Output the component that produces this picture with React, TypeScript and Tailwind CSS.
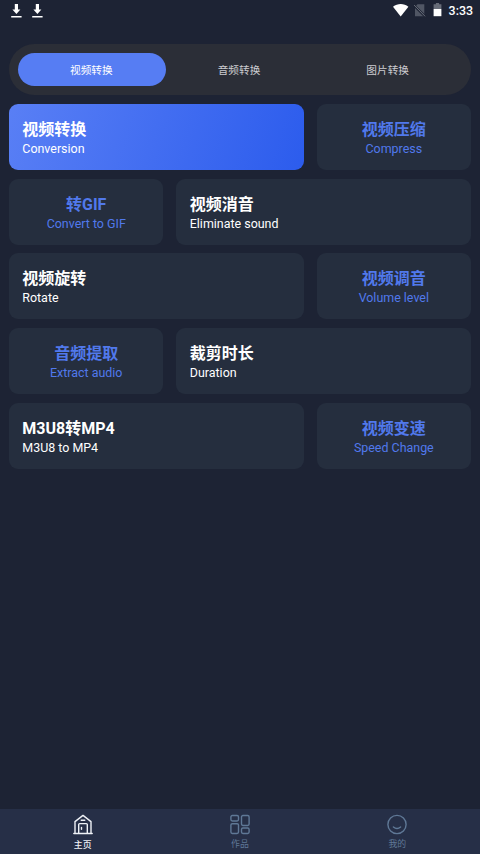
type Card = { title: string; sub: string; tone: "primary" | "plain" | "accent" };

const rows: Card[][] = [
  [
    { title: "视频转换", sub: "Conversion", tone: "primary" },
    { title: "视频压缩", sub: "Compress", tone: "accent" },
  ],
  [
    { title: "转GIF", sub: "Convert to GIF", tone: "accent" },
    { title: "视频消音", sub: "Eliminate sound", tone: "plain" },
  ],
  [
    { title: "视频旋转", sub: "Rotate", tone: "plain" },
    { title: "视频调音", sub: "Volume level", tone: "accent" },
  ],
  [
    { title: "音频提取", sub: "Extract audio", tone: "accent" },
    { title: "裁剪时长", sub: "Duration", tone: "plain" },
  ],
  [
    { title: "M3U8转MP4", sub: "M3U8 to MP4", tone: "plain" },
    { title: "视频变速", sub: "Speed Change", tone: "accent" },
  ],
];

const tones = {
  primary: "flex-1 items-start pl-[13.3px] text-white bg-[linear-gradient(107deg,#597ff5,#2c5ced)]",
  plain: "flex-1 items-start pl-[13.3px] text-white bg-[#252e3e]",
  accent: "w-[154.4px] items-center text-[#5179ec] bg-[#252e3e]",
};

function DownloadIcon() {
  return (
    <svg width="11" height="14" viewBox="0 0 11 14" fill="#fff">
      <path d="M3.8 0h3.2v5.6h2.4L5.4 10 1.4 5.6h2.4zM.2 11.9h10.4v1.6H.2z" />
    </svg>
  );
}

function StatusBar() {
  return (
    <header className="flex h-[21px] items-start justify-between pl-[11px] pr-[7px]">
      <div className="flex gap-[10px] pt-1">
        <DownloadIcon />
        <DownloadIcon />
      </div>
      <div className="flex items-start">
        <svg width="52" height="21" viewBox="0 0 52 21">
          <path d="M0 6.7C4.5 3.2 10.9 3.2 15.4 6.7L7.7 16.5z" fill="#fff" />
          <path d="M24.5 4.3h6.8v11.9H22V7z" fill="#505664" />
          <path d="M20.8 5.2l11 11" stroke="#1d2334" strokeWidth="2.4" />
          <path d="M21.1 5l11 11.3" stroke="#676c78" strokeWidth="1" />
          <path d="M42.9 3h3.2v1.2h2.3v4.9h-7.8V4.2h2.3z" fill="#686d79" />
          <path d="M40.6 9h7.8v7.2h-7.8z" fill="#fff" />
        </svg>
        <span className="ml-1 mt-1 text-[12.4px] leading-[14px] font-medium text-white">3:33</span>
      </div>
    </header>
  );
}

function HomeIcon() {
  return (
    <svg width="20" height="21" viewBox="0 0 20 21" fill="none" stroke="#eef1f6" strokeWidth="1.4" strokeLinejoin="round" strokeLinecap="round">
      <path d="M.8 19.5h18.4M2 19.4V7.6L10 1.4l8 6.2v11.8M5.7 19.2v-8.6q0-1 1-1h6.6q1 0 1 1v8.6M8.2 6.3h3.6M8.5 13.5v1.8" />
    </svg>
  );
}

function WorksIcon() {
  return (
    <svg width="20" height="21" viewBox="0 0 20 21" fill="none" stroke="#5f7896" strokeWidth="1.4">
      <rect x=".9" y="1.5" width="7.6" height="5.5" rx="1.4" />
      <rect x="11.5" y="1.5" width="7.6" height="10" rx="1.4" />
      <rect x=".9" y="9.7" width="7.6" height="9.8" rx="1.4" />
      <rect x="11.5" y="14" width="7.6" height="5.5" rx="1.4" />
    </svg>
  );
}

function ProfileIcon() {
  return (
    <svg width="20" height="21" viewBox="0 0 20 21" fill="none" stroke="#5f7896" strokeWidth="1.4" strokeLinecap="round">
      <circle cx="10" cy="10.5" r="9.1" />
      <path d="M6.4 13q3.6 3 7.2 0" />
    </svg>
  );
}

export default function App() {
  return (
    <div className="flex h-[854px] w-[480px] flex-col bg-[#1d2334] font-['Roboto','Noto_Sans_CJK_SC',sans-serif]">
      <StatusBar />
      <nav className="mx-[9px] mt-[23px] flex h-[51px] items-center rounded-[26px] bg-[#2b2e37] pl-[9px] pr-[10px] text-[10.67px] text-[#cbccd0]">
        <span className="flex h-[33px] flex-1 items-center justify-center rounded-full bg-[#567df3] pr-px pt-[2px] text-white">视频转换</span>
        <span className="flex h-[33px] flex-1 items-center justify-center pr-[2px] pt-[2px]">音频转换</span>
        <span className="flex h-[33px] flex-1 items-center justify-center pt-[2px]">图片转换</span>
      </nav>
      <main className="mx-[9px] mt-[9px] flex flex-1 flex-col gap-[8.95px]">
        {rows.map((row) => (
          <section key={row[0].title} className="flex h-[65.8px] gap-[13.1px]">
            {row.map((c) => (
              <div key={c.title} className={`flex flex-col justify-center rounded-[9px] pt-[4.6px] ${tones[c.tone]}`}>
                <span className="text-[16px] leading-[19px] font-bold">{c.title}</span>
                <span className="text-[12.44px] leading-[19.4px]">{c.sub}</span>
              </div>
            ))}
          </section>
        ))}
      </main>
      <footer className="flex h-[45px] bg-[#262f47] px-[4px] text-[8.9px] leading-[13px] text-[#5f7896]">
        <div className="flex flex-1 flex-col items-center pt-[5px] font-medium text-[#eef1f6]">
          <HomeIcon />
          <span className="mt-[4px]">主页</span>
        </div>
        <div className="flex flex-1 flex-col items-center pt-[5px]">
          <WorksIcon />
          <span className="mt-[3px]">作品</span>
        </div>
        <div className="flex flex-1 flex-col items-center pt-[5px]">
          <ProfileIcon />
          <span className="mt-[3px]">我的</span>
        </div>
      </footer>
    </div>
  );
}
